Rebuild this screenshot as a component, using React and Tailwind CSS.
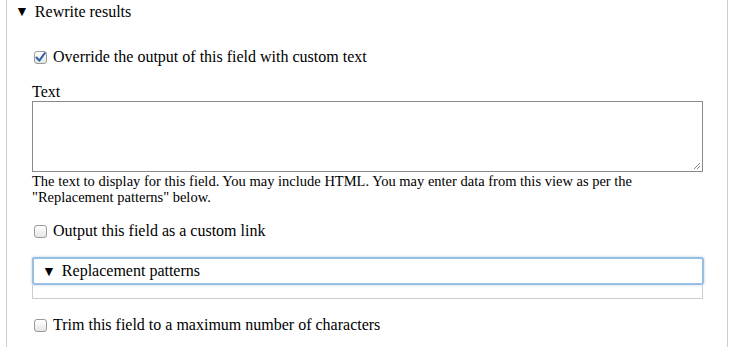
import React from 'react';

const Box = ({ checked }) => (
  <span className="inline-flex items-center justify-center w-[13px] h-[13px] rounded-[3px] border border-[#9a9a9a] bg-gradient-to-b from-white to-[#e6e6e6] shrink-0">
    {checked && (
      <svg width="11" height="11" viewBox="0 0 11 11">
        <path d="M1.5 5.5 L4.3 8.6 L9.8 1.2" fill="none" stroke="#2f5fa8" strokeWidth="2" strokeLinecap="round" strokeLinejoin="round" />
      </svg>
    )}
  </span>
);

const Check = ({ checked, label }) => (
  <label className="flex items-center gap-[6px] pl-[2px] text-[16px] leading-[20px]">
    <Box checked={checked} />
    <span>{label}</span>
  </label>
);

export default function App() {
  return (
    <div className="w-[745px] h-[347px] bg-white overflow-hidden text-black font-['Liberation_Serif',serif]">
      <div className="ml-[6px] w-[722px] h-full border-l border-r border-[#cccccc] pt-[2px]">
        <div className="flex items-center gap-[6px] pl-[8px] text-[16px] leading-[20px]">
          <span className="text-[14px]">▼</span>
          <span>Rewrite results</span>
        </div>

        <div className="pl-[25px] pr-[24px]">
          <div className="mt-[25px]">
            <Check checked label="Override the output of this field with custom text" />
          </div>

          <div className="mt-[16px] text-[16px] leading-[18px]">Text</div>
          <div className="relative h-[71px] border border-[#8a8a8a]">
            <svg className="absolute right-[1px] bottom-[1px]" width="9" height="9" viewBox="0 0 9 9">
              <path d="M8 2 L2 8 M8 5 L5 8" stroke="#888" strokeWidth="1" />
            </svg>
          </div>
          <p className="mt-[1px] max-w-[640px] text-[14.5px] leading-[16px]">
            The text to display for this field. You may include HTML. You may enter data from this view as per the "Replacement patterns" below.
          </p>

          <div className="mt-[16px]">
            <Check label="Output this field as a custom link" />
          </div>

          <div className="mt-[16px] h-[42px] border border-[#cccccc]">
            <div className="-m-[1px] mr-[-2px] flex items-center gap-[6px] h-[28px] pl-[8px] rounded-[3px] border-[2px] border-[#98bfe0] shadow-[0_0_2px_1px_#dbe8f4] text-[16px]">
              <span className="text-[14px]">▼</span>
              <span>Replacement patterns</span>
            </div>
          </div>

          <div className="mt-[16px]">
            <Check label="Trim this field to a maximum number of characters" />
          </div>
        </div>
      </div>
    </div>
  );
}
